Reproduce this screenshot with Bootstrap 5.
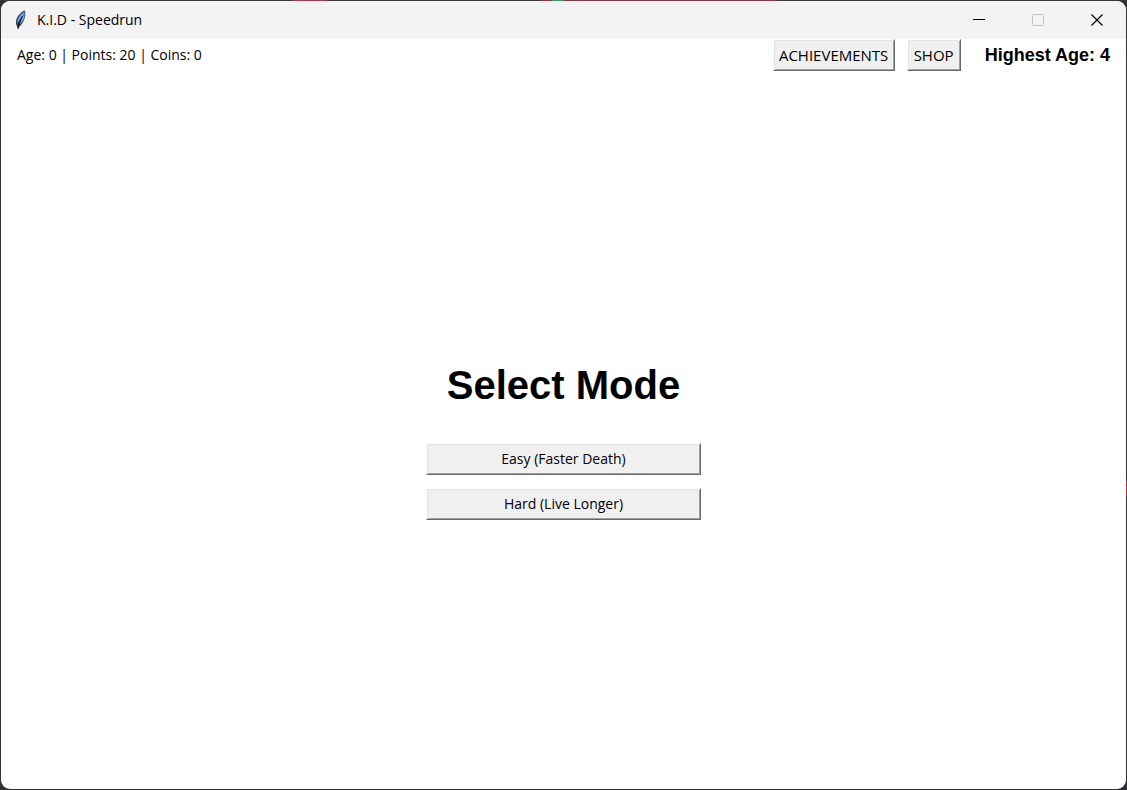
<!DOCTYPE html>
<html lang="en">
<head>
<meta charset="utf-8">
<meta name="viewport" content="width=device-width, initial-scale=1">
<title>K.I.D - Speedrun</title>
<link href="https://cdn.jsdelivr.net/npm/bootstrap@5.3.0/dist/css/bootstrap.min.css" rel="stylesheet">
<style>
  body {
    font-family: "Open Sans", "Noto Sans", sans-serif;
    font-size: 14px;
    line-height: 20px;
    color: #000;
    padding: 1px;
  }
  .desktop {
    background: linear-gradient(90deg, #3b373d 0 26%, #b23350 26% 29%, #3b373d 29% 48%, #8b3347 48% 49%, #3a9b63 49% 50%, #8b3347 50% 69%, #3b373d 69%) top / 100% 1px no-repeat,
      linear-gradient(#b0303a, #b0303a) right 62% / 1px 15px no-repeat,
      #333135;
  }
  .app-window { border-radius: 9px; background: #fff; }
  .title-bar { height: 38px; background: #f3f3f3; padding-left: 13px; gap: 10px; }
  .caption-btn { width: 59px; height: 38px; color: #000; background: transparent; border: 0; padding: 0; }
  .caption-btn:disabled { color: #c4c4c4; }
  .caption-btn svg { display: block; margin: auto; }
  .status-bar { height: 32px; padding: 0 16px; }
  .raised {
    background: #f0f0f0;
    color: #000;
    border: 1px solid;
    border-color: #fff #696969 #696969 #fff;
    box-shadow: inset 1px 1px #e3e3e3, inset -1px -1px #a0a0a0;
    font-size: 14px;
    line-height: 20px;
    padding: 0;
    height: 32px;
  }
  .tool { font-size: 15px; line-height: 18px; padding-bottom: 1px; }
  .tool-wide { width: 122px; }
  .tool-small { width: 54px; margin: 0 24px 0 12px; }
  .record { font: bold 18px/24px "Liberation Sans", Arial, sans-serif; }
  .mode-menu { width: 275px; padding-top: 21px; gap: 13px; }
  .mode-heading { font: bold 40px/48px "Liberation Sans", Arial, sans-serif; margin-bottom: 21px; }
</style>
</head>
<body class="desktop min-vh-100 d-flex">
<div class="app-window flex-fill d-flex flex-column overflow-hidden">
  <header class="title-bar d-flex align-items-center">
    <svg width="13" height="20" viewBox="0 0 13 20" aria-hidden="true">
      <path d="M11 .5C8 1 4 5 2.500 9C1.500 12 2 15 3 16.500L4 19.500L5 17C9 14 12.500 7 11 .5z" fill="#2c3844"/>
      <path d="M10.500 1.500C7 3 4 7 3 11L3.500 14L7 7L5.500 15C9.500 12 11.500 7 10.500 1.500z" fill="#4f8fd2"/>
      <path d="M9.500 3C7 5 5.500 8 4.500 10.500M10 6L7.500 11.500" fill="none" stroke="#86b8ec"/>
      <path d="M8.500 6C6.500 10 5 14 4 18.500" fill="none" stroke="#111"/>
    </svg>
    <span class="me-auto">K.I.D - Speedrun</span>
    <div class="d-flex">
      <button class="caption-btn" type="button" aria-label="Minimize"><svg width="12" height="12"><path d="M0 5.500h12" stroke="currentColor"/></svg></button>
      <button class="caption-btn" type="button" aria-label="Maximize" disabled><svg width="12" height="12"><rect x=".5" y=".5" width="11" height="11" rx="1" fill="none" stroke="currentColor"/></svg></button>
      <button class="caption-btn" type="button" aria-label="Close"><svg width="12" height="12"><path d="M.5 .5l11 11m0-11l-11 11" stroke="currentColor" stroke-width="1.200"/></svg></button>
    </div>
  </header>
  <div class="status-bar d-flex align-items-center">
    <span class="me-auto">Age: 0 | Points: 20 | Coins: 0</span>
    <button class="raised tool tool-wide" type="button">ACHIEVEMENTS</button>
    <button class="raised tool tool-small" type="button">SHOP</button>
    <span class="record">Highest Age: 4</span>
  </div>
  <main class="flex-fill d-flex align-items-center justify-content-center">
    <div class="mode-menu d-flex flex-column">
      <h1 class="mode-heading text-center text-nowrap">Select Mode</h1>
      <button class="raised" type="button">Easy (Faster Death)</button>
      <button class="raised" type="button">Hard (Live Longer)</button>
    </div>
  </main>
</div>
<script src="https://cdn.jsdelivr.net/npm/bootstrap@5.3.0/dist/js/bootstrap.bundle.min.js"></script>
</body>
</html>
